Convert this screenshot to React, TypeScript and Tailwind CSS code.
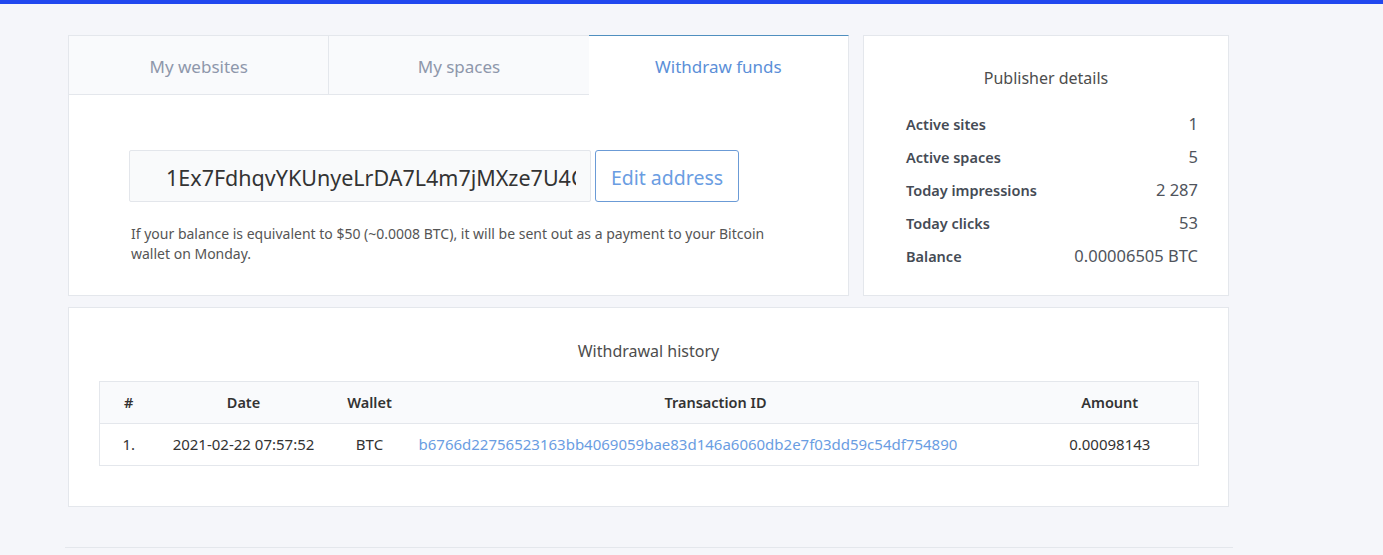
import React from 'react';

const font = { fontFamily: '"Noto Sans", "Open Sans", sans-serif' };

const stats = [
  { label: 'Active sites', value: '1' },
  { label: 'Active spaces', value: '5' },
  { label: 'Today impressions', value: '2 287' },
  { label: 'Today clicks', value: '53' },
  { label: 'Balance', value: '0.00006505 BTC' },
];

const tabs = ['My websites', 'My spaces', 'Withdraw funds'];

export default function App() {
  const active = 2;
  return (
    <div className="min-h-[555px] bg-[#f5f6fa] font-['Noto_Sans',sans-serif]" style={font}>
      <div className="h-[4px] bg-[#2148ef]" />
      <div className="w-[1161px] ml-[68px] pt-[31px]">
        <div className="flex gap-[14px]">
          {/* tabs card */}
          <div className="w-[781px] h-[261px] bg-white border border-[#e4e7ec]">
            <div className="flex h-[60px] -m-px">
              {tabs.map((t, i) =>
                i === active ? (
                  <div
                    key={t}
                    className="flex-1 flex items-center justify-center pt-[3px] bg-white border-t border-t-[#4f8fbf] border-r border-[#e4e7ec] text-[17px] text-[#5b8fd8]"
                  >
                    {t}
                  </div>
                ) : (
                  <div
                    key={t}
                    className="flex-1 flex items-center justify-center pt-[3px] bg-[#f9fafc] border border-[#e4e7ec] -mr-px last:mr-0 text-[17px] text-[#8e97ab]"
                  >
                    {t}
                  </div>
                )
              )}
            </div>
            <div className="pl-[60px] pt-[56px]">
              <div className="flex gap-[4px]">
                <input
                  readOnly
                  value="1Ex7FdhqvYKUnyeLrDA7L4m7jMXze7U4CsxYq"
                  className="w-[462px] h-[52px] bg-[#f9fafb] border border-[#e3e6eb] rounded-[2px] pl-[36px] pr-[14px] pt-[3px] text-[21.5px] text-[#333] outline-none"
                  style={font}
                />
                <button className="h-[52px] w-[144px] pt-[3px] border border-[#6b9bd6] rounded-[3px] text-[19.5px] text-[#6a9de2] bg-white">
                  Edit address
                </button>
              </div>
              <p className="mt-[22px] ml-[2px] w-[655px] text-[14px] leading-[20px] text-[#555]">
                If your balance is equivalent to $50 (~0.0008 BTC), it will be sent out as a payment to your Bitcoin wallet on Monday.
              </p>
            </div>
          </div>
          {/* publisher details */}
          <div className="w-[366px] h-[261px] bg-white border border-[#e4e7ec] pl-[42px] pr-[30px] pt-[30px]">
            <div className="text-center text-[16px] text-[#4d4d4d] -ml-[12px]">Publisher details</div>
            <div className="mt-[18px] flex flex-col">
              {stats.map((s) => (
                <div key={s.label} className="flex justify-between items-center h-[33px]">
                  <span className="text-[14.5px] font-semibold text-[#454b55]">{s.label}</span>
                  <span className="text-[16.5px] text-[#4f545c]">{s.value}</span>
                </div>
              ))}
            </div>
          </div>
        </div>

        {/* withdrawal history */}
        <div className="mt-[11px] h-[200px] bg-white border border-[#e4e7ec] px-[30px] pt-[31px]">
          <div className="text-center text-[16px] text-[#4d4d4d]">Withdrawal history</div>
          <table className="mt-[18px] w-[1100px] border border-[#e4e7ec] border-collapse text-[15px] text-[#333]">
            <thead>
              <tr className="h-[42px] bg-[#f9fafc] border-b border-[#e4e7ec] text-[14.5px]">
                <th className="w-[58px] font-semibold">#</th>
                <th className="w-[172px] font-semibold">Date</th>
                <th className="w-[80px] font-semibold">Wallet</th>
                <th className="w-[612px] font-semibold">Transaction ID</th>
                <th className="font-semibold">Amount</th>
              </tr>
            </thead>
            <tbody>
              <tr className="h-[42px]">
                <td className="text-center">1.</td>
                <td className="text-center">2021-02-22 07:57:52</td>
                <td className="text-center">BTC</td>
                <td className="pl-[9px] text-[#6a9de2]">
                  b6766d22756523163bb4069059bae83d146a6060db2e7f03dd59c54df754890
                </td>
                <td className="text-center">0.00098143</td>
              </tr>
            </tbody>
          </table>
        </div>

        <div className="mt-[40px] -ml-[3px] w-[1168px] h-px bg-[#e4e7ec]" />
      </div>
    </div>
  );
}
